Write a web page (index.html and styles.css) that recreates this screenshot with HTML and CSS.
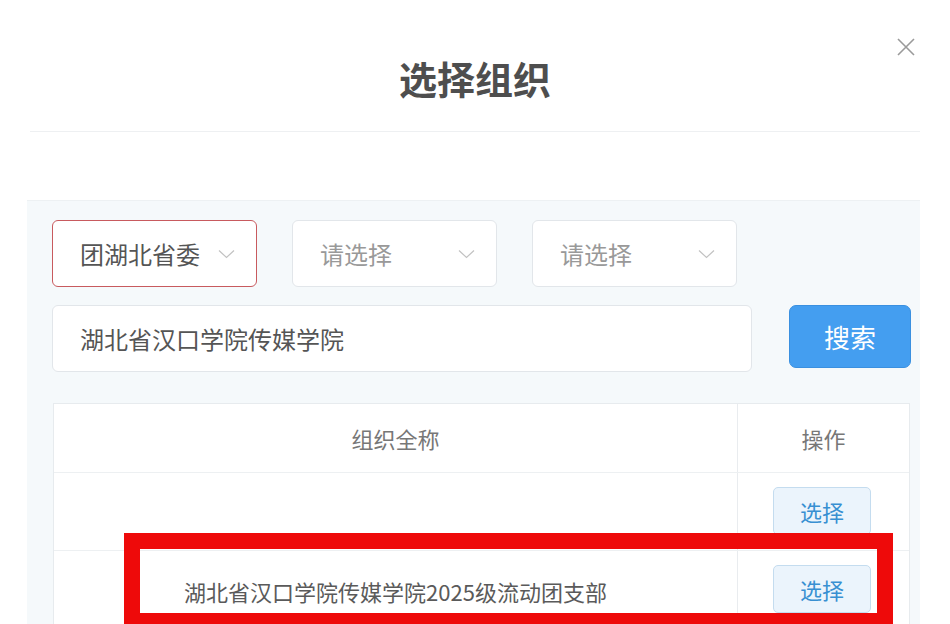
FILE: index.html
```html
<!DOCTYPE html>
<html>
    <head>
        <meta name="viewport" content="width=device-width, initial-scale=1" />
        <link rel="stylesheet" href="styles.css">
    </head>
    <body>
        <div id="modal">
            <div id="head">
                <div id="title">选择组织</div>
                <a id="close" href="#">
                    <svg width="18" height="18" viewBox="0 0 18 18"><path d="M1 1L17 17M17 1L1 17" stroke="#9a9a9a" stroke-width="1.6" fill="none" /></svg>
                </a>
            </div>
            <div id="divider"></div>
            <div id="panel">
                <div class="filters">
                    <div class="select active">
                        <span class="val">团湖北省委</span>
                        <svg class="chev" width="17" height="10" viewBox="0 0 17 10"><path d="M1 1.5L8.5 8.5L16 1.5" stroke="#c2c2c2" stroke-width="1.2" fill="none" /></svg>
                    </div>
                    <div class="select">
                        <span class="ph">请选择</span>
                        <svg class="chev" width="17" height="10" viewBox="0 0 17 10"><path d="M1 1.5L8.5 8.5L16 1.5" stroke="#c2c2c2" stroke-width="1.2" fill="none" /></svg>
                    </div>
                    <div class="select">
                        <span class="ph">请选择</span>
                        <svg class="chev" width="17" height="10" viewBox="0 0 17 10"><path d="M1 1.5L8.5 8.5L16 1.5" stroke="#c2c2c2" stroke-width="1.2" fill="none" /></svg>
                    </div>
                </div>
                <div class="search-row">
                    <div class="input">湖北省汉口学院传媒学院</div>
                    <button class="search-btn">搜索</button>
                </div>
                <div class="tbl">
                    <div class="tr th">
                        <div class="td">组织全称</div>
                        <div class="td op">操作</div>
                    </div>
                    <div class="tr">
                        <div class="td"></div>
                        <div class="td op"><button class="pick">选择</button></div>
                    </div>
                    <div class="tr">
                        <div class="td name">湖北省汉口学院传媒学院2025级流动团支部</div>
                        <div class="td op"><button class="pick">选择</button></div>
                    </div>
                </div>
            </div>
            <!-- annotation box drawn over the row -->
            <div id="mark"></div>
        </div>
    </body>
</html>
```
FILE: styles.css
```css
body {
    margin: 0;
    background-color: #fff;
    font-family: "Noto Sans CJK SC", sans-serif;
    overflow: hidden;
}

#modal {
    position: relative;
    width: 950px;
    height: 624px;
}
#head {
    height: 131px;
}
#title {
    padding-top: 52px;
    line-height: 52px;
    font-size: 38px;
    font-weight: bold;
    color: #4e4e4e;
    text-align: center;
}
#close {
    position: absolute;
    top: 37px;
    right: 35px;
    display: block;
    width: 18px;
    height: 18px;
}
#divider {
    margin: 0 30px;
    border-top: 1px solid #eef0f2;
}

#panel {
    margin: 68px 0 0 27px;
    width: 893px;
    height: 440px;
    padding: 19px 0 0 25px;
    box-sizing: border-box;
    background-color: #f5f9fb;
    border-top: 1px solid #edf1f3;
}

.filters {
    display: flex;
    gap: 35px;
}
.select {
    display: flex;
    align-items: center;
    justify-content: space-between;
    width: 205px;
    height: 67px;
    box-sizing: border-box;
    padding: 0 21px 0 27px;
    background-color: #fff;
    border: 1px solid #e2e6ea;
    border-radius: 6px;
    font-size: 24px;
}
.select.active {
    border: 1.5px solid #c85a5e;
}
.val {
    color: #555;
}
.ph {
    color: #999;
}
.chev {
    display: block;
}

.search-row {
    display: flex;
    align-items: flex-start;
    margin-top: 18px;
}
.input {
    width: 700px;
    height: 67px;
    box-sizing: border-box;
    padding-left: 27px;
    line-height: 65px;
    background-color: #fff;
    border: 1px solid #e2e6ea;
    border-radius: 6px;
    font-size: 24px;
    color: #555;
}
.search-btn {
    margin-left: 37px;
    width: 122px;
    height: 63px;
    background-color: #449ef0;
    border: 1px solid #3a90e0;
    border-radius: 7px;
    color: #fff;
    font-family: inherit;
    font-size: 26px;
}

.tbl {
    margin: 31px 0 0 1px;
    width: 855px;
    background-color: #fff;
    border: 1px solid #e7ebee;
    border-bottom: none;
}
.tr {
    display: grid;
    grid-template-columns: 683px 1fr;
    height: 78px;
    border-top: 1px solid #edf0f2;
    box-sizing: border-box;
}
.th {
    height: 68px;
    border-top: none;
}
.td {
    display: flex;
    align-items: center;
    justify-content: center;
    font-size: 22px;
    color: #555;
}
.th .td {
    color: #777;
}
.name {
    padding-top: 2px;
    color: #5a5a5a;
}
.op {
    border-left: 1px solid #e9ecef;
}
.tr .op {
    align-items: flex-start;
    padding-top: 14px;
}
.th .op {
    align-items: center;
    padding-top: 0;
}
.pick {
    width: 98px;
    height: 48px;
    margin-right: 3px;
    background-color: #ebf4fc;
    border: 1px solid #c4dcef;
    border-radius: 5px;
    color: #3890d2;
    font-family: inherit;
    font-size: 22px;
}

#mark {
    position: absolute;
    left: 124px;
    top: 533px;
    width: 769px;
    height: 96px;
    box-sizing: border-box;
    border: 16px solid #ee0a0a;
}
```
